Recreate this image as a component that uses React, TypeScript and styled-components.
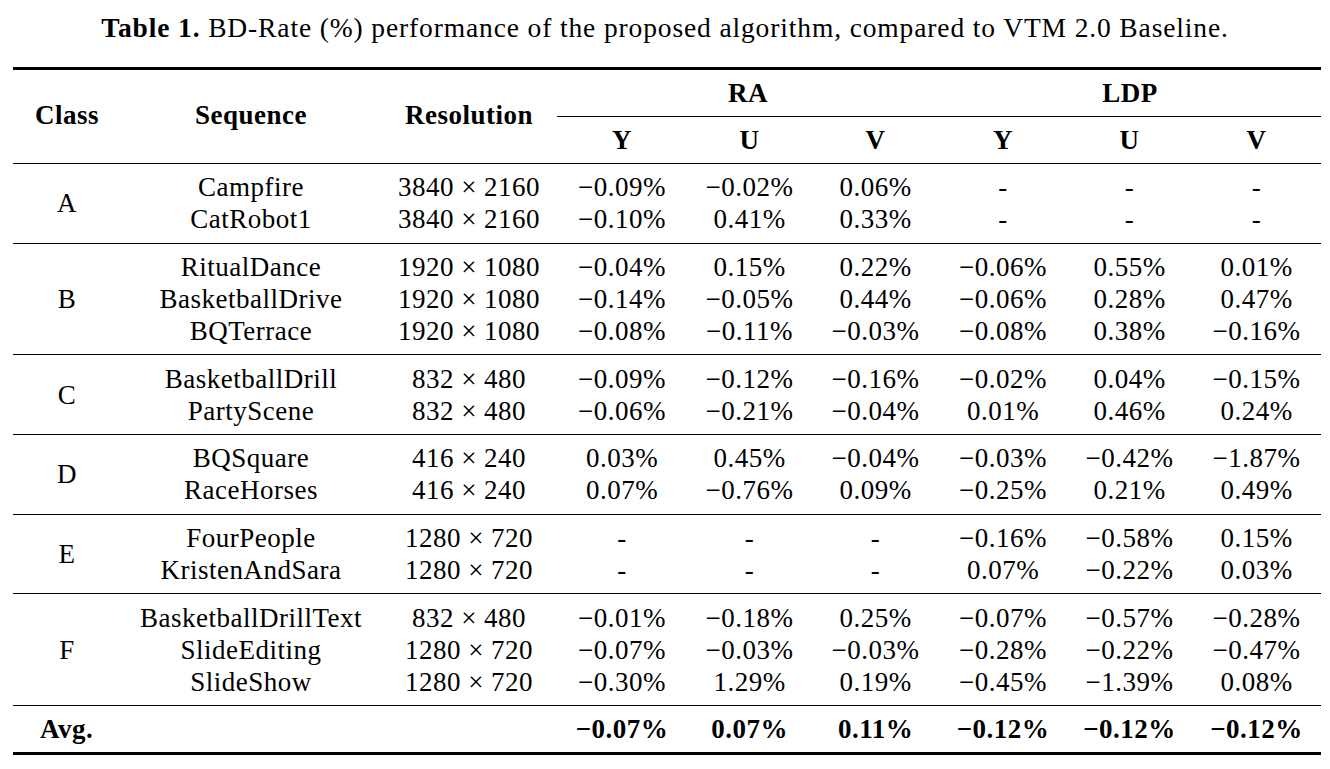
import React from "react";
import styled, { createGlobalStyle } from "styled-components";

const GlobalStyle = createGlobalStyle`
  html, body {
    margin: 0;
    padding: 0;
    background: #ffffff;
  }
  body {
    font-family: "Liberation Serif", "Times New Roman", serif;
    color: #000000;
  }
`;

const Page = styled.div`
  width: 1330px;
  height: 769px;
  padding-top: 12px;
  box-sizing: border-box;
  font-size: 27px;
  background: #fff;
`;

const Caption = styled.div`
  text-align: center;
  font-size: 27.5px;
  letter-spacing: 0.87px;
  line-height: 32px;
  height: 32px;
  white-space: nowrap;
`;

const CaptionLabel = styled.b`
  font-weight: 700;
`;

const Table = styled.table`
  margin: 23px 0 0 13px;
  width: 1308px;
  table-layout: fixed;
  border-collapse: separate;
  border-spacing: 0;
  font-size: 27px;
  letter-spacing: 0.5px;
`;

const HeadCell = styled.th<{ $top?: boolean; $bottom?: boolean; $span?: boolean }>`
  padding: 0 0 ${(p) => (p.$span ? "4px" : "0")} 0;
  height: 46px;
  line-height: 32px;
  font-weight: 700;
  text-align: center;
  vertical-align: middle;
  white-space: nowrap;
  border-top: ${(p) => (p.$top ? "3px solid #000" : "none")};
  border-bottom: ${(p) => (p.$bottom ? "1px solid #000" : "none")};
`;

const Cell = styled.td<{ $first?: boolean; $last?: boolean }>`
  padding: ${(p) => (p.$first ? "7.33px" : "0")} 0 ${(p) => (p.$last ? "7.33px" : "0")} 0;
  height: 32px;
  line-height: 32px;
  text-align: center;
  vertical-align: middle;
  white-space: nowrap;
  border-bottom: ${(p) => (p.$last ? "1px solid #000" : "none")};
`;

const AvgCell = styled.td<{ $left?: boolean }>`
  padding: ${(p) => (p.$left ? "0 0 0 27px" : "0")};
  height: 46px;
  line-height: 32px;
  text-align: ${(p) => (p.$left ? "left" : "center")};
  vertical-align: middle;
  white-space: nowrap;
  font-weight: 700;
  border-bottom: 3px solid #000;
`;

const widths = [108, 260, 176, 130, 125, 127, 128, 125, 129];

type Row = { seq: string; res: string; vals: string[] };
type Group = { cls: string; rows: Row[] };

const groups: Group[] = [
  {
    cls: "A",
    rows: [
      { seq: "Campfire", res: "3840 × 2160", vals: ["−0.09%", "−0.02%", "0.06%", "-", "-", "-"] },
      { seq: "CatRobot1", res: "3840 × 2160", vals: ["−0.10%", "0.41%", "0.33%", "-", "-", "-"] },
    ],
  },
  {
    cls: "B",
    rows: [
      { seq: "RitualDance", res: "1920 × 1080", vals: ["−0.04%", "0.15%", "0.22%", "−0.06%", "0.55%", "0.01%"] },
      { seq: "BasketballDrive", res: "1920 × 1080", vals: ["−0.14%", "−0.05%", "0.44%", "−0.06%", "0.28%", "0.47%"] },
      { seq: "BQTerrace", res: "1920 × 1080", vals: ["−0.08%", "−0.11%", "−0.03%", "−0.08%", "0.38%", "−0.16%"] },
    ],
  },
  {
    cls: "C",
    rows: [
      { seq: "BasketballDrill", res: "832 × 480", vals: ["−0.09%", "−0.12%", "−0.16%", "−0.02%", "0.04%", "−0.15%"] },
      { seq: "PartyScene", res: "832 × 480", vals: ["−0.06%", "−0.21%", "−0.04%", "0.01%", "0.46%", "0.24%"] },
    ],
  },
  {
    cls: "D",
    rows: [
      { seq: "BQSquare", res: "416 × 240", vals: ["0.03%", "0.45%", "−0.04%", "−0.03%", "−0.42%", "−1.87%"] },
      { seq: "RaceHorses", res: "416 × 240", vals: ["0.07%", "−0.76%", "0.09%", "−0.25%", "0.21%", "0.49%"] },
    ],
  },
  {
    cls: "E",
    rows: [
      { seq: "FourPeople", res: "1280 × 720", vals: ["-", "-", "-", "−0.16%", "−0.58%", "0.15%"] },
      { seq: "KristenAndSara", res: "1280 × 720", vals: ["-", "-", "-", "0.07%", "−0.22%", "0.03%"] },
    ],
  },
  {
    cls: "F",
    rows: [
      { seq: "BasketballDrillText", res: "832 × 480", vals: ["−0.01%", "−0.18%", "0.25%", "−0.07%", "−0.57%", "−0.28%"] },
      { seq: "SlideEditing", res: "1280 × 720", vals: ["−0.07%", "−0.03%", "−0.03%", "−0.28%", "−0.22%", "−0.47%"] },
      { seq: "SlideShow", res: "1280 × 720", vals: ["−0.30%", "1.29%", "0.19%", "−0.45%", "−1.39%", "0.08%"] },
    ],
  },
];

const avg = ["−0.07%", "0.07%", "0.11%", "−0.12%", "−0.12%", "−0.12%"];

export default function App() {
  return (
    <>
      <GlobalStyle />
      <Page>
        <Caption>
          <CaptionLabel>Table 1.</CaptionLabel> BD-Rate (%) performance of the proposed algorithm, compared to VTM 2.0 Baseline.
        </Caption>
        <Table>
          <colgroup>
            {widths.map((w, i) => (
              <col key={i} style={{ width: w }} />
            ))}
          </colgroup>
          <thead>
            <tr>
              <HeadCell rowSpan={2} $top $bottom $span>Class</HeadCell>
              <HeadCell rowSpan={2} $top $bottom $span>Sequence</HeadCell>
              <HeadCell rowSpan={2} $top $bottom $span>Resolution</HeadCell>
              <HeadCell colSpan={3} $top $bottom>RA</HeadCell>
              <HeadCell colSpan={3} $top $bottom>LDP</HeadCell>
            </tr>
            <tr>
              {["Y", "U", "V", "Y", "U", "V"].map((h, i) => (
                <HeadCell key={i} $bottom>{h}</HeadCell>
              ))}
            </tr>
          </thead>
          <tbody>
            {groups.flatMap((g) =>
              g.rows.map((r, i) => {
                const first = i === 0;
                const last = i === g.rows.length - 1;
                return (
                  <tr key={g.cls + r.seq}>
                    {first && (
                      <Cell rowSpan={g.rows.length} $first $last>
                        {g.cls}
                      </Cell>
                    )}
                    <Cell $first={first} $last={last}>{r.seq}</Cell>
                    <Cell $first={first} $last={last}>{r.res}</Cell>
                    {r.vals.map((v, j) => (
                      <Cell key={j} $first={first} $last={last}>{v}</Cell>
                    ))}
                  </tr>
                );
              })
            )}
          </tbody>
          <tfoot>
            <tr>
              <AvgCell $left colSpan={3}>Avg.</AvgCell>
              {avg.map((v, j) => (
                <AvgCell key={j}>{v}</AvgCell>
              ))}
            </tr>
          </tfoot>
        </Table>
      </Page>
    </>
  );
}
